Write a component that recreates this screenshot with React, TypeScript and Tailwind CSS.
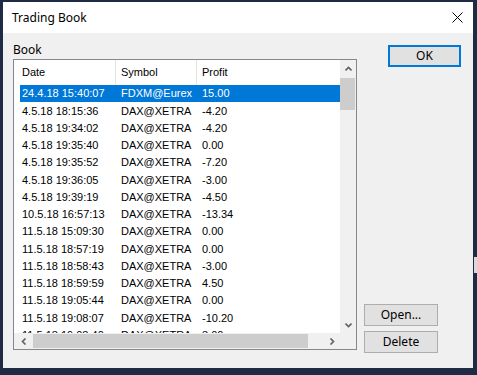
import React from "react";

const rows: [string, string, string][] = [
  ["24.4.18 15:40:07", "FDXM@Eurex", "15.00"],
  ["4.5.18 18:15:36", "DAX@XETRA", "-4.20"],
  ["4.5.18 19:34:02", "DAX@XETRA", "-4.20"],
  ["4.5.18 19:35:40", "DAX@XETRA", "0.00"],
  ["4.5.18 19:35:52", "DAX@XETRA", "-7.20"],
  ["4.5.18 19:36:05", "DAX@XETRA", "-3.00"],
  ["4.5.18 19:39:19", "DAX@XETRA", "-4.50"],
  ["10.5.18 16:57:13", "DAX@XETRA", "-13.34"],
  ["11.5.18 15:09:30", "DAX@XETRA", "0.00"],
  ["11.5.18 18:57:19", "DAX@XETRA", "0.00"],
  ["11.5.18 18:58:43", "DAX@XETRA", "-3.00"],
  ["11.5.18 18:59:59", "DAX@XETRA", "4.50"],
  ["11.5.18 19:05:44", "DAX@XETRA", "0.00"],
  ["11.5.18 19:08:07", "DAX@XETRA", "-10.20"],
  ["11.5.18 19:08:40", "DAX@XETRA", "3.00"],
];

function Chevron({ dir }: { dir: "up" | "down" | "left" | "right" }) {
  const d =
    dir === "up"
      ? "M0.5 4.5 L3.5 1.5 L6.5 4.5"
      : dir === "down"
      ? "M0.5 1.5 L3.5 4.5 L6.5 1.5"
      : dir === "left"
      ? "M4.5 0.5 L1.5 3.5 L4.5 6.5"
      : "M1.5 0.5 L4.5 3.5 L1.5 6.5";
  const w = dir === "up" || dir === "down" ? 7 : 6;
  const h = dir === "up" || dir === "down" ? 6 : 7;
  return (
    <svg width={w} height={h} viewBox={`0 0 ${w} ${h}`}>
      <path d={d} fill="none" stroke="#606060" strokeWidth="1.6" />
    </svg>
  );
}

export default function App() {
  return (
    <div
      className="relative w-[477px] h-[375px] overflow-hidden bg-[#1f2b45] pt-[2px] pl-[3px] pr-[4px] pb-[7px] text-black"
      style={{ fontFamily: '"Noto Sans", "Liberation Sans", sans-serif' }}
    >
      <div className="flex h-full flex-col">
        {/* title bar */}
        <div className="flex h-[31px] items-center justify-between bg-white pl-[9px] pr-[10px]">
          <span className="text-[12px] leading-none">Trading Book</span>
          <svg width="11" height="11" viewBox="0 0 11 11" className="mr-[0px]">
            <path d="M0.5 0.5 L10.5 10.5 M10.5 0.5 L0.5 10.5" stroke="#000" strokeWidth="1" />
          </svg>
        </div>
        {/* body */}
        <div className="flex flex-1 bg-[#f0f0f0] pl-[10px]">
          <div className="flex flex-col pt-[10px]">
            <div className="mb-[2px] h-[14px] text-[12px] leading-[14px]">Book</div>
            <div className="flex h-[291px] w-[344px] flex-col border border-[#828790] bg-white">
              <div className="flex h-[273px]">
                <div
                  className="w-[326px] overflow-hidden text-[11px]"
                  style={{ fontFamily: '"Liberation Sans", Arial, sans-serif' }}
                >
                  <div className="flex h-[25px] items-center">
                    <div className="w-[101px] pl-[8px]">Date</div>
                    <div className="h-full w-px bg-[#e5e5e5]" />
                    <div className="w-[80px] pl-[5px]">Symbol</div>
                    <div className="h-full w-px bg-[#e5e5e5]" />
                    <div className="pl-[5px]">Profit</div>
                  </div>
                  {rows.map((r, i) => (
                    <div
                      key={i}
                      className={
                        "ml-[6px] flex h-[17.25px] w-[320px] items-center whitespace-nowrap " +
                        (i === 0 ? "bg-[#0078d7] text-white" : "")
                      }
                    >
                      <div className="w-[96px] pl-[2px]">{r[0]}</div>
                      <div className="w-[81px] pl-[5px]">{r[1]}</div>
                      <div className="pl-[5px]">{r[2]}</div>
                    </div>
                  ))}
                </div>
                {/* vertical scrollbar */}
                <div className="flex w-[16px] flex-col bg-[#f0f0f0]">
                  <div className="flex h-[18px] items-center justify-center">
                    <Chevron dir="up" />
                  </div>
                  <div className="h-[32px] w-[15px] bg-[#cdcdcd]" />
                  <div className="flex-1" />
                  <div className="flex h-[17px] items-center justify-center">
                    <Chevron dir="down" />
                  </div>
                </div>
              </div>
              {/* horizontal scrollbar */}
              <div className="flex h-[16px] bg-[#f0f0f0]">
                <div className="flex w-[326px] items-center">
                  <div className="flex h-full w-[19px] items-center justify-center">
                    <Chevron dir="left" />
                  </div>
                  <div className="h-[14px] w-[275px] bg-[#cdcdcd]" />
                  <div className="flex-1" />
                  <div className="flex h-full w-[17px] items-center justify-center">
                    <Chevron dir="right" />
                  </div>
                </div>
                <div className="w-[16px]" />
              </div>
            </div>
          </div>
          {/* right column */}
          <div className="ml-[7px] flex w-[97px] flex-col pb-[15px] pt-[12px] text-[12px]">
            <div className="ml-auto flex h-[22px] w-[73px] items-center justify-center border-2 border-[#0078d7] bg-[#e1e1e1]">
              OK
            </div>
            <div className="flex-1" />
            <div className="flex h-[22px] w-[74px] items-center justify-center border border-[#adadad] bg-[#e1e1e1]">
              Open...
            </div>
            <div className="mt-[5px] flex h-[22px] w-[74px] items-center justify-center border border-[#adadad] bg-[#e1e1e1]">
              Delete
            </div>
          </div>
        </div>
      </div>
      <div className="absolute left-[474px] top-[257px] h-[16px] w-[3px] bg-[#d9d9d9]" />
    </div>
  );
}
